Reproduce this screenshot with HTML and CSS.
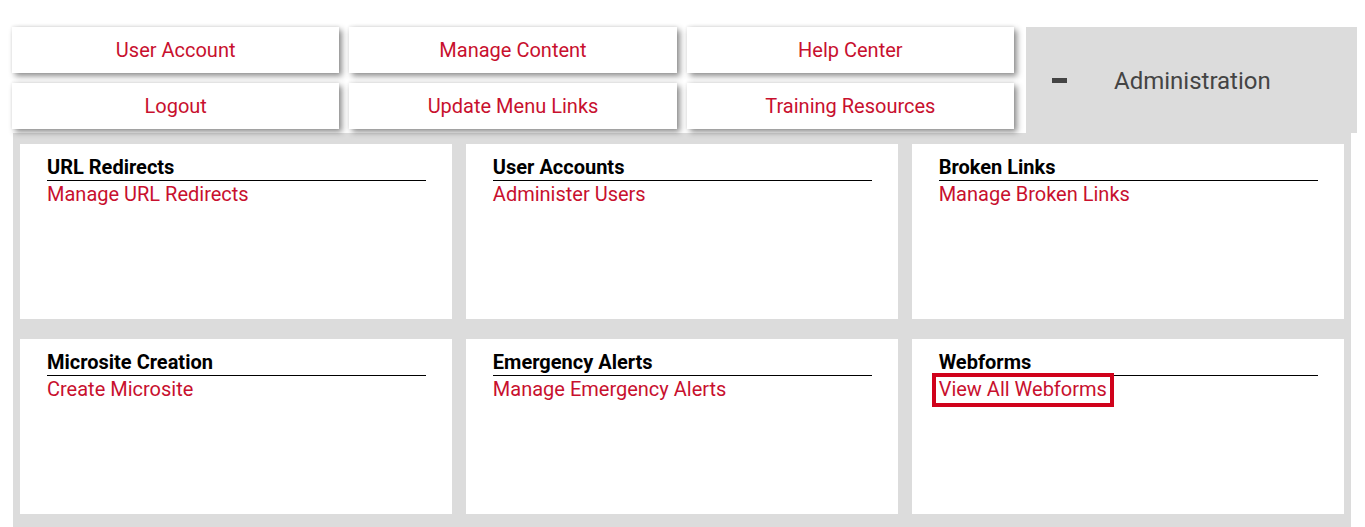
FILE: index.html
```html
<!DOCTYPE html>
<html lang="en">
<head>
<meta charset="utf-8">
<title>Administration</title>
<link rel="stylesheet" href="styles.css">
</head>
<body>
<header class="top">
  <nav class="quick-links">
    <a class="quick-btn" href="#">User Account</a>
    <a class="quick-btn" href="#">Manage Content</a>
    <a class="quick-btn" href="#">Help Center</a>
    <a class="quick-btn" href="#">Logout</a>
    <a class="quick-btn" href="#">Update Menu Links</a>
    <a class="quick-btn" href="#">Training Resources</a>
  </nav>
  <div class="admin-tab">
    <span class="collapse-icon" aria-hidden="true"></span>
    <span class="admin-title">Administration</span>
  </div>
</header>
<main class="admin-panel">
  <section class="card">
    <h3 class="card-title">URL Redirects</h3>
    <a class="card-link" href="#">Manage URL Redirects</a>
  </section>
  <section class="card">
    <h3 class="card-title">User Accounts</h3>
    <a class="card-link" href="#">Administer Users</a>
  </section>
  <section class="card">
    <h3 class="card-title">Broken Links</h3>
    <a class="card-link" href="#">Manage Broken Links</a>
  </section>
  <section class="card">
    <h3 class="card-title">Microsite Creation</h3>
    <a class="card-link" href="#">Create Microsite</a>
  </section>
  <section class="card">
    <h3 class="card-title">Emergency Alerts</h3>
    <a class="card-link" href="#">Manage Emergency Alerts</a>
  </section>
  <section class="card">
    <h3 class="card-title">Webforms</h3>
    <div class="card-link-row"><a class="card-link card-link--focused" href="#">View All Webforms</a></div>
  </section>
</main>
</body>
</html>
```

FILE: styles.css
```css
html, body {
  margin: 0;
  padding: 0;
  background: #ffffff;
  font-family: Roboto, "Liberation Sans", Arial, sans-serif;
}

.top {
  display: flex;
  align-items: flex-start;
  padding: 27px 0 0 12px;
  height: 106px;
}

.quick-links {
  display: grid;
  grid-template-columns: repeat(3, 1fr);
  grid-auto-rows: 46px;
  column-gap: 10px;
  row-gap: 10px;
  width: 1002px;
}

.quick-btn {
  display: flex;
  align-items: center;
  justify-content: center;
  background: #ffffff;
  color: #c8102e;
  font-size: 20px;
  text-decoration: none;
  box-shadow: 3px 3px 6px rgba(0, 0, 0, 0.45), 0 -1px 3px rgba(0, 0, 0, 0.07);
}

.admin-tab {
  display: flex;
  align-items: center;
  margin-left: 12px;
  width: 331px;
  height: 106px;
  background: #dcdcdc;
  padding-left: 26px;
  box-sizing: border-box;
}

.collapse-icon {
  display: block;
  width: 15px;
  height: 5px;
  background: #444444;
  margin-top: 1px;
}

.admin-title {
  margin-left: 47px;
  margin-top: 2px;
  font-size: 24px;
  color: #444444;
}

.admin-panel {
  display: grid;
  grid-template-columns: repeat(3, 1fr);
  grid-auto-rows: 175px;
  column-gap: 13.5px;
  row-gap: 20px;
  margin-left: 13px;
  width: 1338px;
  box-sizing: border-box;
  padding: 11px 7px 13px 7px;
  background: #dcdcdc;
}

.card {
  background: #ffffff;
  padding: 13px 26px 12px 27px;
  min-width: 0;
}

.card-title {
  margin: 0;
  font-size: 20px;
  font-weight: 700;
  line-height: 21px;
  color: #000000;
  padding-bottom: 2px;
  border-bottom: 1px solid #000000;
}

.card-link,
.card-link-row {
  display: block;
  margin-top: 1px;
  font-size: 20px;
  line-height: 24px;
  color: #c8102e;
  text-decoration: none;
}

.card-link-row .card-link {
  margin-top: 0;
}

.card-link--focused {
  display: inline-block;
  padding: 0 3px 2px 3px;
  margin-left: -3px;
  outline: 4px solid #d0021b;
}
```
